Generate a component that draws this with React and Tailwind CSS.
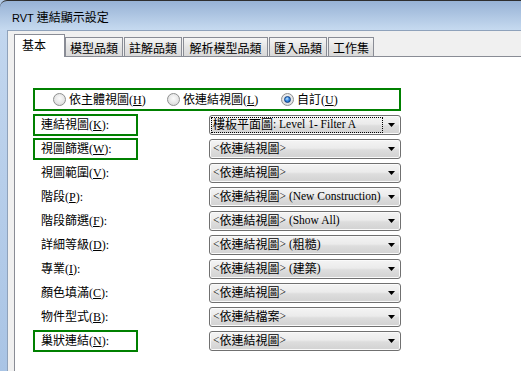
import React from "react";

const serif = { fontFamily: '"Liberation Serif", "Noto Sans CJK TC", serif' };

function Arrow() {
  return (
    <svg width="7" height="4" viewBox="0 0 7 4" className="shrink-0">
      <polygon points="0,0 7,0 3.5,4" fill="#000" />
    </svg>
  );
}

function Dropdown({ children, focus }) {
  return (
    <div className="ml-[71px] w-[192px] h-[20px] shrink-0 rounded-[3px] border border-[#707070] bg-[linear-gradient(#f4f4f4_0%,#ebebeb_45%,#dddddd_55%,#d2d2d2_100%)] shadow-[inset_0_0_0_1px_#fafafa] flex items-center pr-[5px]">
      {focus ? (
        <div className="ml-[1px] w-[172px] h-[16px] border border-dotted border-black flex items-center pl-[1px] whitespace-nowrap text-[12px] leading-none">
          {children}
        </div>
      ) : (
        <div className="pl-[3px] flex items-center whitespace-nowrap text-[12px] leading-none">{children}</div>
      )}
      <div className="flex-1" />
      <Arrow />
    </div>
  );
}

function Label({ text, k, boxed }) {
  return (
    <div
      className={
        "w-[105px] h-[22px] shrink-0 border-2 flex items-center pl-[6px] text-[12px] leading-none whitespace-nowrap " +
        (boxed ? "border-[#008000]" : "border-transparent")
      }
    >
      {text}(<u>{k}</u>):
    </div>
  );
}

function Radio({ checked, text, k, w }) {
  return (
    <div className={"flex items-center shrink-0 " + w}>
      <div className="w-[13px] h-[13px] rounded-full border border-[#8e8f8f] bg-[radial-gradient(circle_at_50%_40%,#fbfbfb_0%,#e6e6e6_55%,#cfcfcf_100%)] flex items-center justify-center shrink-0">
        {checked && (
          <div className="w-[7px] h-[7px] rounded-full bg-[radial-gradient(circle_at_40%_35%,#bfe6ff_0%,#3d8ee6_45%,#0d4fa8_100%)] border border-[#0c3d80]" />
        )}
      </div>
      <div className="ml-[3px] text-[12px] leading-none whitespace-nowrap">
        {text}(<u>{k}</u>)
      </div>
    </div>
  );
}

const L = ({ children }) => <span className="text-[11.5px]">{children}</span>;

export default function App() {
  const rows = [
    { t: "連結視圖", k: "K", boxed: true, v: <>樓板平面圖<L>: Level 1- Filter A</L></>, focus: true },
    { t: "視圖篩選", k: "W", boxed: true, v: <><L>&lt;</L>依連結視圖<L>&gt;</L></> },
    { t: "視圖範圍", k: "V", v: <><L>&lt;</L>依連結視圖<L>&gt;</L></> },
    { t: "階段", k: "P", v: <><L>&lt;</L>依連結視圖<L>&gt; (New Construction)</L></> },
    { t: "階段篩選", k: "F", v: <><L>&lt;</L>依連結視圖<L>&gt; (Show All)</L></> },
    { t: "詳細等級", k: "D", v: <><L>&lt;</L>依連結視圖<L>&gt; (</L>粗糙<L>)</L></> },
    { t: "專業", k: "I", v: <><L>&lt;</L>依連結視圖<L>&gt; (</L>建築<L>)</L></> },
    { t: "顏色填滿", k: "C", v: <><L>&lt;</L>依連結視圖<L>&gt;</L></> },
    { t: "物件型式", k: "B", v: <><L>&lt;</L>依連結檔案<L>&gt;</L></> },
    { t: "巢狀連結", k: "N", boxed: true, v: <><L>&lt;</L>依連結視圖<L>&gt;</L></> },
  ];
  const tabs = [
    { t: "模型品類", w: "w-[58px]", ml: "" },
    { t: "註解品類", w: "w-[58px]", ml: "ml-[1px]" },
    { t: "解析模型品類", w: "w-[85px]", ml: "ml-[1px]" },
    { t: "匯入品類", w: "w-[58px]", ml: "ml-[1px]" },
    { t: "工作集", w: "w-[46px]", ml: "ml-[1px]" },
  ];
  return (
    <div className="w-[521px] h-[371px] overflow-hidden flex flex-col bg-[#b2cae6] text-black" style={serif}>
      <div
        className="h-[30px] shrink-0 border-t border-[#2e2e2e] rounded-tl-[7px] bg-[linear-gradient(#97b2d5,#c6daf0)] pl-[12px] pt-[11px] text-[12px] leading-none whitespace-nowrap"
        style={{ fontFamily: '"Liberation Sans", "Noto Sans CJK TC", sans-serif' }}
      >
        <span className="text-[11px]">RVT </span>連結顯示設定
      </div>
      <div className="flex flex-1 min-h-0">
        <div className="w-[7px] shrink-0 bg-[linear-gradient(#c2d6ee,#a9c4e5)]" />
        <div className="flex-1 min-w-0 flex flex-col bg-[#f0f0f0] border-l border-t border-[#8fa2bb] pl-[6px] pt-[3px]">
          <div className="flex items-end h-[22px] shrink-0">
            <div className="relative z-10 w-[51px] h-[23px] -mb-[1px] bg-white border-l border-t border-r border-[#898c95] flex items-center pl-[7px] pb-[1px] text-[12px] leading-none shrink-0">
              基本
            </div>
            {tabs.map((tb) => (
              <div
                key={tb.t}
                className={
                  "h-[19px] shrink-0 border-l border-t border-r border-[#898c95] bg-[linear-gradient(#f6f6f6,#e4e4e4_50%,#d9d9d9)] flex items-center justify-center pt-[3px] text-[12px] leading-none whitespace-nowrap " +
                  tb.w +
                  " " +
                  tb.ml
                }
              >
                {tb.t}
              </div>
            ))}
          </div>
          <div className="flex-1 bg-white border-l border-t border-[#898c95] pl-[18px] pt-[31px] flex flex-col">
            <div className="w-[368px] h-[23px] border-2 border-[#008000] flex items-center pl-[18px] shrink-0">
              <Radio text="依主體視圖" k="H" w="w-[114px]" />
              <Radio text="依連結視圖" k="L" w="w-[114px]" />
              <Radio text="自訂" k="U" checked w="" />
            </div>
            <div className="mt-[2px] flex flex-col">
              {rows.map((r) => (
                <div key={r.t} className="h-[24px] flex items-center">
                  <Label text={r.t} k={r.k} boxed={r.boxed} />
                  <Dropdown focus={r.focus}>{r.v}</Dropdown>
                </div>
              ))}
            </div>
          </div>
        </div>
      </div>
    </div>
  );
}
